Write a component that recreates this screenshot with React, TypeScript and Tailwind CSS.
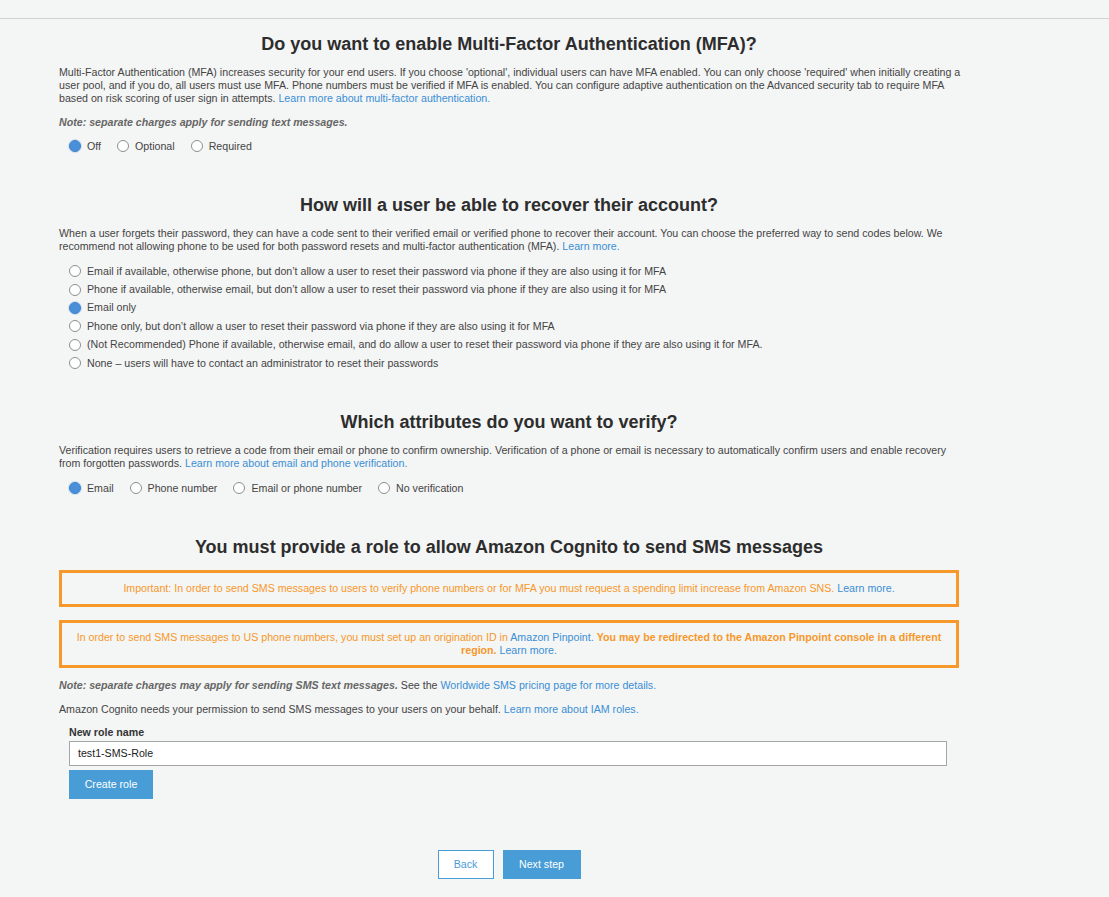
import React from "react";

type Opt = { label: string; checked?: boolean };

function Radio({ label, checked }: Opt) {
  return (
    <label className="flex items-center gap-[6px] h-[14px]">
      {checked ? (
        <span className="w-[12px] h-[12px] rounded-full bg-[#4a90d9] border border-[#3f84cc] shadow-[0_0_0_1px_#cfdff0]" />
      ) : (
        <span className="w-[12px] h-[12px] rounded-full bg-white border border-[#8e8e8e]" />
      )}
      <span>{label}</span>
    </label>
  );
}

function Heading({ children, className }: { children: React.ReactNode; className: string }) {
  return (
    <h2 className={`w-[900px] text-center text-[18px] leading-[22px] font-bold text-[#2d2d2d] ${className}`}>
      {children}
    </h2>
  );
}

const link = "text-[#3a8fd6]";

export default function App() {
  const recovery: Opt[] = [
    { label: "Email if available, otherwise phone, but don\u2019t allow a user to reset their password via phone if they are also using it for MFA" },
    { label: "Phone if available, otherwise email, but don\u2019t allow a user to reset their password via phone if they are also using it for MFA" },
    { label: "Email only", checked: true },
    { label: "Phone only, but don\u2019t allow a user to reset their password via phone if they are also using it for MFA" },
    { label: "(Not Recommended) Phone if available, otherwise email, and do allow a user to reset their password via phone if they are also using it for MFA." },
    { label: "None \u2013 users will have to contact an administrator to reset their passwords" },
  ];

  return (
    <div className="min-h-[897px] bg-[#f4f5f5] text-[#444] font-['Liberation_Sans',Arial,sans-serif] text-[10.65px] leading-[13px]">
      <div className="h-[19px] border-b border-[#d2d2d2]" />
      <div className="ml-[59px] w-[904px] pb-[18px]">
        {/* MFA */}
        <Heading className="mt-[14px]">Do you want to enable Multi-Factor Authentication (MFA)?</Heading>
        <p className="mt-[11px]">
          Multi-Factor Authentication (MFA) increases security for your end users. If you choose 'optional', individual users can have MFA enabled. You can only choose 'required' when initially creating a user pool, and if you do, all users must use MFA. Phone numbers must be verified if MFA is enabled. You can configure adaptive authentication on the Advanced security tab to require MFA based on risk scoring of user sign in attempts.{" "}
          <span className={link}>Learn more about multi-factor authentication.</span>
        </p>
        <p className="mt-[11px] italic font-bold text-[#666]">Note: separate charges apply for sending text messages.</p>
        <div className="mt-[10px] pl-[10px] flex gap-[16px]">
          <Radio label="Off" checked />
          <Radio label="Optional" />
          <Radio label="Required" />
        </div>

        {/* Account recovery */}
        <Heading className="mt-[41px]">How will a user be able to recover their account?</Heading>
        <p className="mt-[11px]">
          When a user forgets their password, they can have a code sent to their verified email or verified phone to recover their account. You can choose the preferred way to send codes below. We recommend not allowing phone to be used for both password resets and multi-factor authentication (MFA).{" "}
          <span className={link}>Learn more.</span>
        </p>
        <div className="mt-[9px] pl-[10px] flex flex-col">
          {recovery.map((o) => (
            <div key={o.label} className="h-[18.4px] flex items-center">
              <Radio {...o} />
            </div>
          ))}
        </div>

        {/* Verification */}
        <Heading className="mt-[39px]">Which attributes do you want to verify?</Heading>
        <p className="mt-[11px]">
          Verification requires users to retrieve a code from their email or phone to confirm ownership. Verification of a phone or email is necessary to automatically confirm users and enable recovery from forgotten passwords.{" "}
          <span className={link}>Learn more about email and phone verification.</span>
        </p>
        <div className="mt-[11px] pl-[10px] flex gap-[16px]">
          <Radio label="Email" checked />
          <Radio label="Phone number" />
          <Radio label="Email or phone number" />
          <Radio label="No verification" />
        </div>

        {/* SMS role */}
        <Heading className="mt-[41px]">You must provide a role to allow Amazon Cognito to send SMS messages</Heading>
        <div className="mt-[12px] w-[900px] h-[37px] border-[3px] border-[#f7982a] flex items-center justify-center text-center text-[#f7982a]">
          <p>
            Important: In order to send SMS messages to users to verify phone numbers or for MFA you must request a spending limit increase from Amazon SNS.{" "}
            <span className={link}>Learn more.</span>
          </p>
        </div>
        <div className="mt-[13px] w-[900px] h-[48px] border-[3px] border-[#f7982a] flex items-center justify-center text-center text-[#f7982a] px-[10px]">
          <p>
            In order to send SMS messages to US phone numbers, you must set up an origination ID in{" "}
            <span className={link}>Amazon Pinpoint.</span>{" "}
            <b>You may be redirected to the Amazon Pinpoint console in a different region.</b>{" "}
            <span className={link}>Learn more.</span>
          </p>
        </div>
        <p className="mt-[11px]">
          <span className="italic font-bold text-[#666]">Note: separate charges may apply for sending SMS text messages.</span> See the{" "}
          <span className={link}>Worldwide SMS pricing page for more details.</span>
        </p>
        <p className="mt-[11px]">
          Amazon Cognito needs your permission to send SMS messages to your users on your behalf.{" "}
          <span className={link}>Learn more about IAM roles.</span>
        </p>
        <div className="pl-[10px] mt-[10px]">
          <div className="font-bold text-[#333]">New role name</div>
          <div className="mt-[2px] w-[878px] h-[25px] bg-white border border-[#a6a6a6] flex items-center px-[8px] text-[#222]">
            test1-SMS-Role
          </div>
          <button className="mt-[4px] w-[84px] h-[29px] bg-[#489dd6] text-white flex items-center justify-center">
            Create role
          </button>
        </div>

        <div className="mt-[51px] w-[900px] flex justify-center gap-[9px]">
          <button className="w-[56px] h-[29px] bg-white border border-[#4a9cd6] text-[#4a9cd6]">Back</button>
          <button className="w-[78px] h-[29px] bg-[#489dd6] text-white">Next step</button>
        </div>
      </div>
    </div>
  );
}
